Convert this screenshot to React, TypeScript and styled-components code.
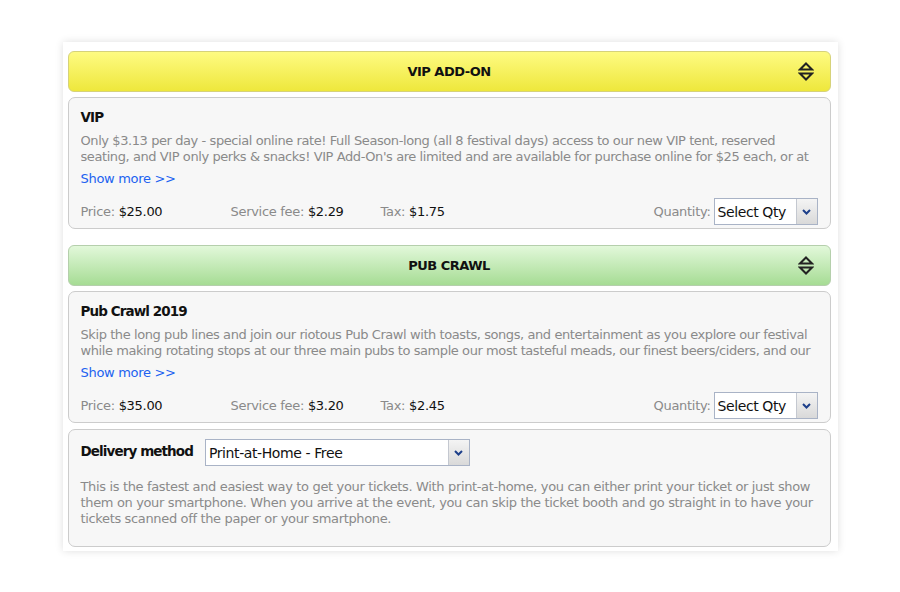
import React from 'react';
import styled, { createGlobalStyle } from 'styled-components';

const GlobalStyle = createGlobalStyle`
    html, body {
        margin: 0;
        padding: 0;
        background: #ffffff;
    }
    body {
        font-family: Tahoma, "DejaVu Sans", Verdana, sans-serif;
    }
`;

type Tone = 'yellow' | 'green';

type Addon = {
    id: string;
    header: string;
    tone: Tone;
    title: string;
    text: string;
    price: string;
    fee: string;
    tax: string;
};

const addons: Addon[] = [
    {
        id: 'vip',
        header: 'VIP ADD-ON',
        tone: 'yellow',
        title: 'VIP',
        text: "Only $3.13 per day - special online rate! Full Season-long (all 8 festival days) access to our new VIP tent, reserved seating, and VIP only perks & snacks! VIP Add-On's are limited and are available for purchase online for $25 each, or at the gate while supplies last.",
        price: '$25.00',
        fee: '$2.29',
        tax: '$1.75',
    },
    {
        id: 'pub',
        header: 'PUB CRAWL',
        tone: 'green',
        title: 'Pub Crawl 2019',
        text: 'Skip the long pub lines and join our riotous Pub Crawl with toasts, songs, and entertainment as you explore our festival while making rotating stops at our three main pubs to sample our most tasteful meads, our finest beers/ciders, and our delicious wines.',
        price: '$35.00',
        fee: '$3.20',
        tax: '$2.45',
    },
];

const SortIcon = () => (
    <svg width="16" height="19" viewBox="0 0 16 19">
        <path d="M8 1.5 L14 7.5 H2 Z" fill="none" stroke="#222" strokeWidth="2" strokeLinejoin="miter" />
        <path d="M2 11.5 H14 L8 17.5 Z" fill="none" stroke="#222" strokeWidth="2" strokeLinejoin="miter" />
    </svg>
);

const Chevron = () => (
    <svg width="9" height="6" viewBox="0 0 9 6">
        <path d="M1 1 L4.5 4.5 L8 1" fill="none" stroke="#1d3f8a" strokeWidth="2" />
    </svg>
);

const App = () => {
    return (
        <>
            <GlobalStyle />
            <Page>
                <Card>
                    {addons.map(a => (
                        <Section key={a.id}>
                            <Header tone={a.tone}>
                                {a.header}
                                <IconSlot>
                                    <SortIcon />
                                </IconSlot>
                            </Header>
                            <Box>
                                <Title>{a.title}</Title>
                                <Description>{a.text}</Description>
                                <ShowMore href="#">Show more &gt;&gt;</ShowMore>
                                <PriceRow>
                                    <PriceCell>
                                        Price: <Value>{a.price}</Value>
                                    </PriceCell>
                                    <PriceCell>
                                        Service fee: <Value>{a.fee}</Value>
                                    </PriceCell>
                                    <PriceCell>
                                        Tax: <Value>{a.tax}</Value>
                                    </PriceCell>
                                    <Quantity>
                                        Quantity:
                                        <SelectBox width={104}>
                                            <SelectText>Select Qty</SelectText>
                                            <SelectButton>
                                                <Chevron />
                                            </SelectButton>
                                        </SelectBox>
                                    </Quantity>
                                </PriceRow>
                            </Box>
                        </Section>
                    ))}
                    <DeliveryBox>
                        <DeliveryRow>
                            <DeliveryLabel>Delivery method</DeliveryLabel>
                            <SelectBox width={265}>
                                <SelectText>Print-at-Home - Free</SelectText>
                                <SelectButton>
                                    <Chevron />
                                </SelectButton>
                            </SelectBox>
                        </DeliveryRow>
                        <DeliveryText>
                            This is the fastest and easiest way to get your tickets. With print-at-home, you can either print your ticket or just show
                            them on your smartphone. When you arrive at the event, you can skip the ticket booth and go straight in to have your
                            tickets scanned off the paper or your smartphone.
                        </DeliveryText>
                    </DeliveryBox>
                </Card>
            </Page>
        </>
    );
};
export default App;

const Page = styled.div`
    width: 900px;
    height: 592px;
    padding-top: 42px;
    box-sizing: border-box;
    display: flex;
    justify-content: center;
    align-items: flex-start;
`;

const Card = styled.div`
    width: 775px;
    box-sizing: border-box;
    background: #ffffff;
    padding: 9px 7px 4px 5px;
    box-shadow: 0 0 8px rgba(0, 0, 0, 0.13);
    display: flex;
    flex-direction: column;
`;

const Section = styled.div`
    display: flex;
    flex-direction: column;
    gap: 5px;
    margin-bottom: 16px;

    &:nth-child(2) {
        margin-bottom: 6px;
    }
`;

const Header = styled.div<{ tone: Tone }>`
    position: relative;
    height: 41px;
    box-sizing: border-box;
    border: 1px solid ${p => (p.tone === 'yellow' ? '#d6d27a' : '#b5cfac')};
    border-radius: 6px;
    background: ${p =>
        p.tone === 'yellow'
            ? 'linear-gradient(to bottom, #fefb82 0%, #eee73c 100%)'
            : 'linear-gradient(to bottom, #e2f8da 0%, #a6dc94 100%)'};
    display: flex;
    align-items: center;
    justify-content: center;
    font-size: 13px;
    font-weight: bold;
    letter-spacing: -0.5px;
    color: #111;
`;

const IconSlot = styled.span`
    position: absolute;
    right: 16px;
    top: 10px;
    display: flex;
`;

const Box = styled.div`
    background: #f7f7f7;
    border: 1px solid #cccccc;
    border-radius: 7px;
    padding: 11px 12px 3px 12px;
    display: flex;
    flex-direction: column;
`;

const Title = styled.div`
    font-size: 13.5px;
    font-weight: bold;
    letter-spacing: -0.9px;
    color: #111;
    line-height: 16px;
    margin-bottom: 8px;
`;

const Description = styled.div`
    font-size: 13px;
    line-height: 16px;
    letter-spacing: -0.42px;
    color: #8a8a8a;
    height: 32px;
    overflow: hidden;
`;

const ShowMore = styled.a`
    font-size: 13px;
    line-height: 16px;
    letter-spacing: -0.3px;
    color: #2162f0;
    text-decoration: none;
    margin-top: 6px;
    align-self: flex-start;
`;

const PriceRow = styled.div`
    display: flex;
    align-items: center;
    margin-top: 11px;
    height: 27px;
    font-size: 13px;
    letter-spacing: -0.3px;
    color: #8a8a8a;
`;

const PriceCell = styled.div`
    width: 150px;
`;

const Value = styled.span`
    color: #111;
`;

const Quantity = styled.div`
    margin-left: auto;
    display: flex;
    align-items: center;
    gap: 3px;
`;

const SelectBox = styled.div<{ width: number }>`
    width: ${p => p.width}px;
    height: 27px;
    box-sizing: border-box;
    border: 1px solid #a9b3c6;
    background: #ffffff;
    display: flex;
    align-items: stretch;
`;

const SelectText = styled.span`
    flex: 1;
    display: flex;
    align-items: center;
    padding-left: 3px;
    font-size: 14px;
    letter-spacing: -0.4px;
    color: #111;
`;

const SelectButton = styled.span`
    width: 20px;
    border-left: 1px solid #c4c8d0;
    background: linear-gradient(to bottom, #f4f4f4, #d9d9d9);
    display: flex;
    align-items: center;
    justify-content: center;
`;

const DeliveryBox = styled(Box)`
    padding: 9px 12px 19px 12px;
`;

const DeliveryRow = styled.div`
    display: flex;
    align-items: center;
    gap: 12px;
`;

const DeliveryLabel = styled.div`
    font-size: 13.5px;
    font-weight: bold;
    letter-spacing: -0.9px;
    color: #111;
    margin-top: -3px;
`;

const DeliveryText = styled.div`
    margin-top: 13px;
    font-size: 13px;
    line-height: 16px;
    letter-spacing: -0.35px;
    color: #8a8a8a;
`;
